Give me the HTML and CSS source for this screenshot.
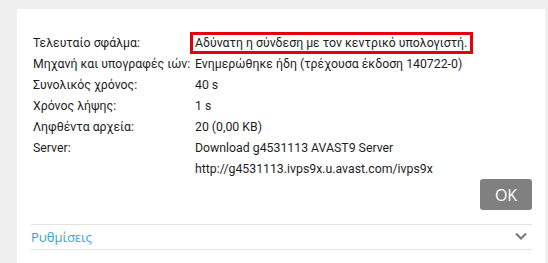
FILE: index.html
```html
<!DOCTYPE html>
<html lang="el">
<head>
    <meta charset="UTF-8">
    <title>Ενημέρωση</title>
    <link rel="stylesheet" href="styles.css">
</head>
<body>
    <div class="panel">
        <div class="details">
            <div class="row">
                <span class="label">Τελευταίο σφάλμα:</span>
                <span class="value error">Αδύνατη η σύνδεση με τον κεντρικό υπολογιστή.</span>
            </div>
            <div class="row">
                <span class="label">Μηχανή και υπογραφές ιών:</span>
                <span class="value">Ενημερώθηκε ήδη (τρέχουσα έκδοση 140722-0)</span>
            </div>
            <div class="row">
                <span class="label">Συνολικός χρόνος:</span>
                <span class="value">40 s</span>
            </div>
            <div class="row">
                <span class="label">Χρόνος λήψης:</span>
                <span class="value">1 s</span>
            </div>
            <div class="row">
                <span class="label">Ληφθέντα αρχεία:</span>
                <span class="value">20 (0,00 KB)</span>
            </div>
            <div class="row">
                <span class="label">Server:</span>
                <span class="value">Download g4531113 AVAST9 Server</span>
            </div>
            <div class="row">
                <span class="label"></span>
                <span class="value">http://g4531113.ivps9x.u.avast.com/ivps9x</span>
            </div>
        </div>
        <div class="actions">
            <button class="btn-ok">OK</button>
        </div>
        <div class="settings">
            <span>Ρυθμίσεις</span>
            <svg class="chevron" width="12" height="8" viewBox="0 0 12 8">
                <path d="M0 1 L2 0 L6 4 L10 0 L12 1 L6 7 Z" fill="#7a7a7a"/>
            </svg>
        </div>
    </div>
</body>
</html>
```

FILE: styles.css
```css
body, html {
    margin: 0;
    padding: 0;
    height: 100%;
    background-color: #f0f0f0;
    overflow: hidden;
}
body {
    padding: 9px 3px 0 17px;
    box-sizing: border-box;
    font-family: Roboto, sans-serif;
    font-size: 12.3px;
    color: #1e1e1e;
}
.panel {
    background-color: #fff;
    height: 100%;
    padding: 23px 13px 0 14px;
    box-sizing: border-box;
}
.details {
    display: flex;
    flex-direction: column;
}
.row {
    display: flex;
    height: 21px;
    align-items: center;
}
.label {
    width: 162px;
    padding-left: 2px;
    flex-shrink: 0;
    white-space: nowrap;
}
.value {
    white-space: nowrap;
}
.value.error {
    border: 3px solid #e5000f;
    padding: 0 3px 0 2px;
    margin-left: -5px;
    line-height: 16px;
}
.actions {
    display: flex;
    justify-content: flex-end;
}
.btn-ok {
    width: 52px;
    height: 31px;
    border: none;
    border-radius: 3px;
    background-color: #808080;
    color: #fff;
    font-family: 'Open Sans', sans-serif;
    font-size: 16px;
    padding: 0;
}
.settings {
    margin-top: 14px;
    border-top: 1px solid #e3e3e3;
    border-bottom: 1px solid #e3e3e3;
    height: 24px;
    display: flex;
    align-items: center;
    justify-content: space-between;
    color: #2aa8de;
    font-family: 'Open Sans', sans-serif;
    font-size: 13px;
    padding-right: 5px;
}
```
